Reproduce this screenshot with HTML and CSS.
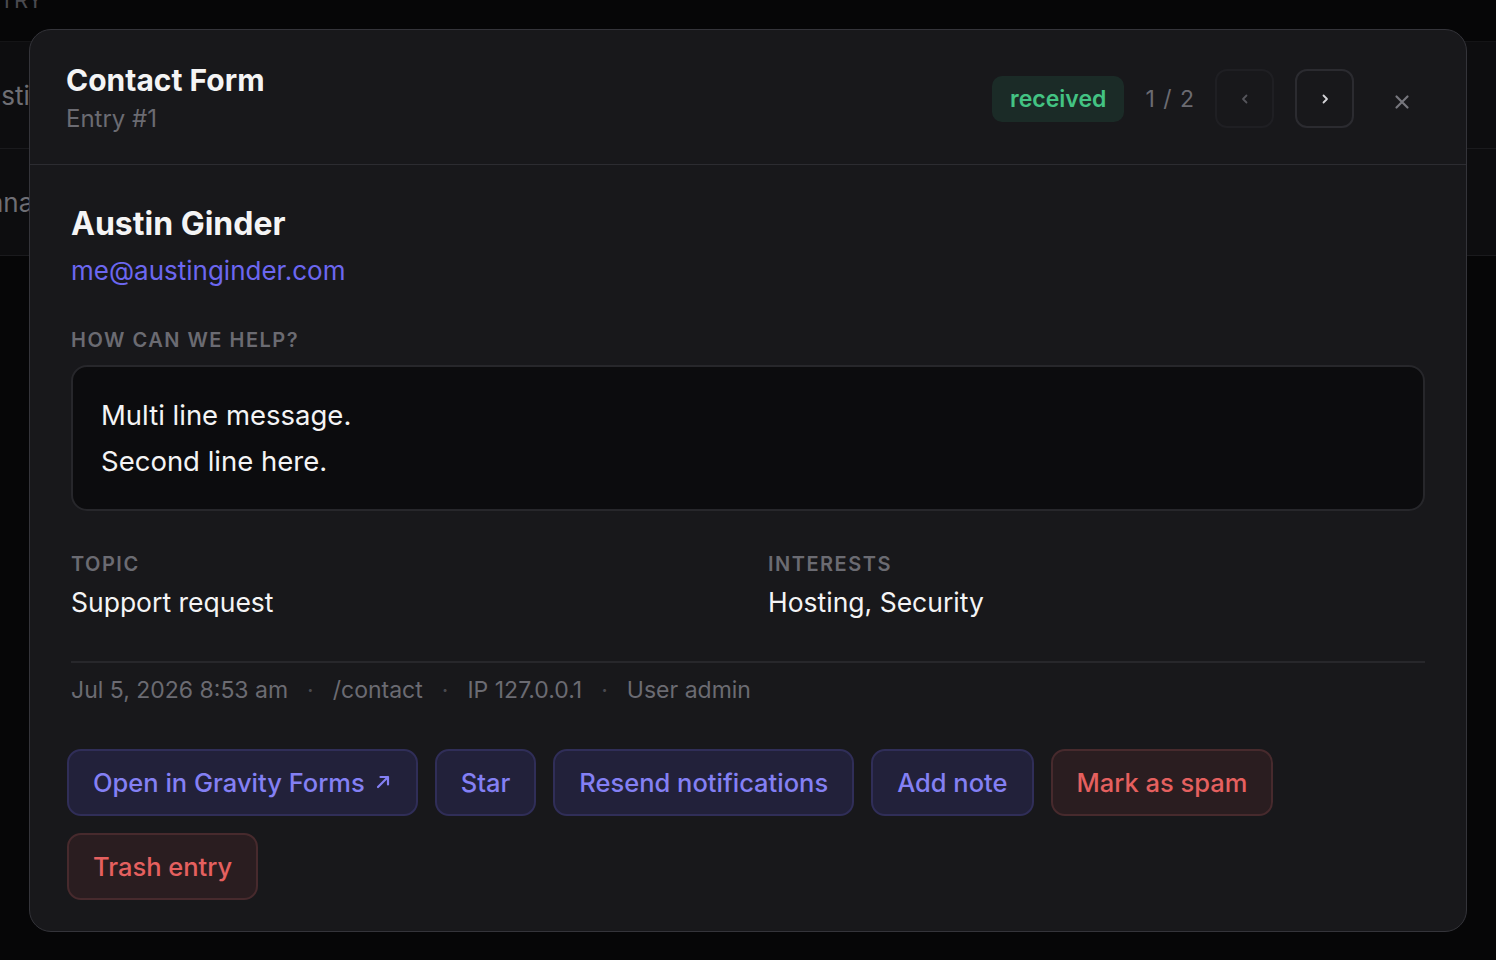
FILE: index.html
```html
<!DOCTYPE html>
<html lang="en">
<head>
  <meta charset="UTF-8" />
  <title>Entries</title>
  <meta name="viewport" content="width=device-width, initial-scale=1.0"/>
  <link rel="stylesheet" href="styles.css">
</head>
<body>

  <div class="page">
    <div class="table-head"><span class="cell">ENTRY</span></div>
    <div class="table-row"><span class="cell">Austin Ginder</span></div>
    <div class="table-row"><span class="cell">Dana Smith</span></div>
  </div>

  <div class="overlay">
    <div class="modal">
      <div class="modal-header">
        <div class="titles">
          <h2>Contact Form</h2>
          <div class="subtitle">Entry #1</div>
        </div>
        <div class="header-actions">
          <span class="badge">received</span>
          <span class="pager">1 / 2</span>
          <button class="nav-btn" disabled>
            <svg width="14" height="14" viewBox="0 0 14 14"><path d="M8.5 3.5 5 7l3.5 3.5" fill="none" stroke="currentColor" stroke-width="1.8" stroke-linecap="round" stroke-linejoin="round"/></svg>
          </button>
          <button class="nav-btn">
            <svg width="14" height="14" viewBox="0 0 14 14"><path d="M5.5 3.5 9 7l-3.5 3.5" fill="none" stroke="currentColor" stroke-width="1.8" stroke-linecap="round" stroke-linejoin="round"/></svg>
          </button>
          <button class="close-btn">
            <svg width="18" height="18" viewBox="0 0 18 18"><path d="M3.5 3.5l11 11M14.5 3.5l-11 11" fill="none" stroke="currentColor" stroke-width="2.2" stroke-linecap="round"/></svg>
          </button>
        </div>
      </div>

      <div class="modal-body">
        <div class="name">Austin Ginder</div>
        <a class="email" href="#">me@austinginder.com</a>

        <div class="label">How can we help?</div>
        <div class="message-box">
          <p>Multi line message.</p>
          <p>Second line here.</p>
        </div>

        <div class="fields">
          <div class="field">
            <div class="label">Topic</div>
            <div class="value">Support request</div>
          </div>
          <div class="field">
            <div class="label">Interests</div>
            <div class="value">Hosting, Security</div>
          </div>
        </div>

        <div class="meta">
          <span>Jul 5, 2026 8:53 am</span>
          <span class="dot">·</span>
          <span>/contact</span>
          <span class="dot">·</span>
          <span>IP 127.0.0.1</span>
          <span class="dot">·</span>
          <span>User admin</span>
        </div>

        <div class="actions">
          <button class="btn">Open in Gravity Forms
            <svg class="arrow" width="18" height="18" viewBox="0 0 18 18"><path d="M4 14 14 4M6.5 4H14v7.5" fill="none" stroke="currentColor" stroke-width="2.2" stroke-linecap="round" stroke-linejoin="round"/></svg>
          </button>
          <button class="btn">Star</button>
          <button class="btn">Resend notifications</button>
          <button class="btn">Add note</button>
          <button class="btn danger">Mark as spam</button>
          <button class="btn danger">Trash entry</button>
        </div>
      </div>
    </div>
  </div>

</body>
</html>
```

FILE: styles.css
```css
body {
  font-family: Inter, "Open Sans", sans-serif;
  background: #060607;
  margin: 0;
  min-height: 100vh;
  color: #f4f4f5;
}

.table-head {
  height: 41px;
  color: #4a4a4f;
  font-size: 22px;
  line-height: 0;
  border-bottom: 1px solid #141416;
}

.table-row {
  height: 106px;
  display: flex;
  align-items: center;
  background: #0d0d0f;
  border-bottom: 1px solid #1a1a1d;
  color: #6e6e74;
  font-size: 26px;
}

.cell {
  margin-left: -32px;
}

.table-head .cell {
  margin-left: -30px;
}

.table-row + .table-row .cell {
  margin-left: -30px;
}

.overlay {
  position: fixed;
  inset: 0;
  display: flex;
  align-items: center;
  justify-content: center;
}

.modal {
  width: calc(100% - 58px);
  background: #18181b;
  border: 1px solid #34343a;
  border-radius: 22px;
  box-sizing: border-box;
}

.modal-header {
  display: flex;
  justify-content: space-between;
  align-items: center;
  padding: 30px 55px 26px 36px;
  border-bottom: 1px solid #2c2c31;
}

.modal-header h2 {
  margin: 0;
  font-size: 30px;
  font-weight: 700;
  color: #f4f4f5;
  line-height: 40px;
}

.subtitle {
  color: #6b6b72;
  font-size: 24px;
  line-height: 38px;
}

.header-actions {
  display: flex;
  align-items: center;
  gap: 21px;
}

.badge {
  background: #1b2b27;
  color: #43c383;
  font-size: 23px;
  font-weight: 600;
  padding: 0 18px;
  height: 46px;
  line-height: 46px;
  border-radius: 10px;
}

.pager {
  color: #6b6b72;
  font-size: 23px;
  word-spacing: 2px;
}

.nav-btn {
  width: 59px;
  height: 59px;
  border-radius: 12px;
  border: 2px solid #2b2b30;
  background: #18181b;
  color: #d4d4d8;
  display: flex;
  align-items: center;
  justify-content: center;
  padding: 0;
  cursor: pointer;
}

.nav-btn:disabled {
  border-color: #1f1f23;
  color: #55555b;
}

.close-btn {
  background: none;
  border: none;
  color: #76767d;
  padding: 0;
  margin-left: 18px;
  display: flex;
  margin-top: 6px;
  cursor: pointer;
}

.modal-body {
  padding: 38px 41px 31px 41px;
}

.name {
  font-size: 32px;
  font-weight: 700;
  color: #f4f4f5;
  line-height: 42px;
}

.email {
  display: inline-block;
  color: #6c67f0;
  text-decoration: none;
  font-size: 26px;
  line-height: 40px;
  margin-top: 6px;
}

.label {
  text-transform: uppercase;
  letter-spacing: 1.5px;
  color: #6b6b72;
  font-size: 20px;
  font-weight: 600;
  line-height: 28px;
}

.modal-body > .label {
  margin-top: 35px;
}

.message-box {
  margin-top: 11px;
  background: #0c0c0e;
  border: 2px solid #27272b;
  border-radius: 16px;
  padding: 25px 28px;
}

.message-box p {
  margin: 0;
  font-size: 27.5px;
  line-height: 46px;
  color: #f4f4f5;
}

.fields {
  display: grid;
  grid-template-columns: 1fr 1fr;
  column-gap: 40px;
  margin-top: 39px;
}

.value {
  font-size: 26.5px;
  line-height: 36px;
  margin-top: 6px;
  color: #f4f4f5;
}

.meta {
  margin-top: 41px;
  border-top: 2px solid #27272b;
  padding-top: 12px;
  color: #6b6b72;
  font-size: 23px;
  line-height: 30px;
  display: flex;
  gap: 19px;
}

.dot {
  color: #4a4a50;
}

.actions {
  display: flex;
  flex-wrap: wrap;
  gap: 17px;
  margin: 44px -4px 0;
}

.btn {
  font-family: inherit;
  font-size: 25.5px;
  font-weight: 500;
  height: 67px;
  padding: 0 24px;
  border-radius: 14px;
  border: 2px solid #302e58;
  background: #22213a;
  color: #8480f4;
  cursor: pointer;
  display: flex;
  align-items: center;
  gap: 9px;
}

.btn:hover {
  background: #29284a;
}

.btn.danger {
  border-color: #472a2d;
  background: #2a1d20;
  color: #e5605f;
}
```
